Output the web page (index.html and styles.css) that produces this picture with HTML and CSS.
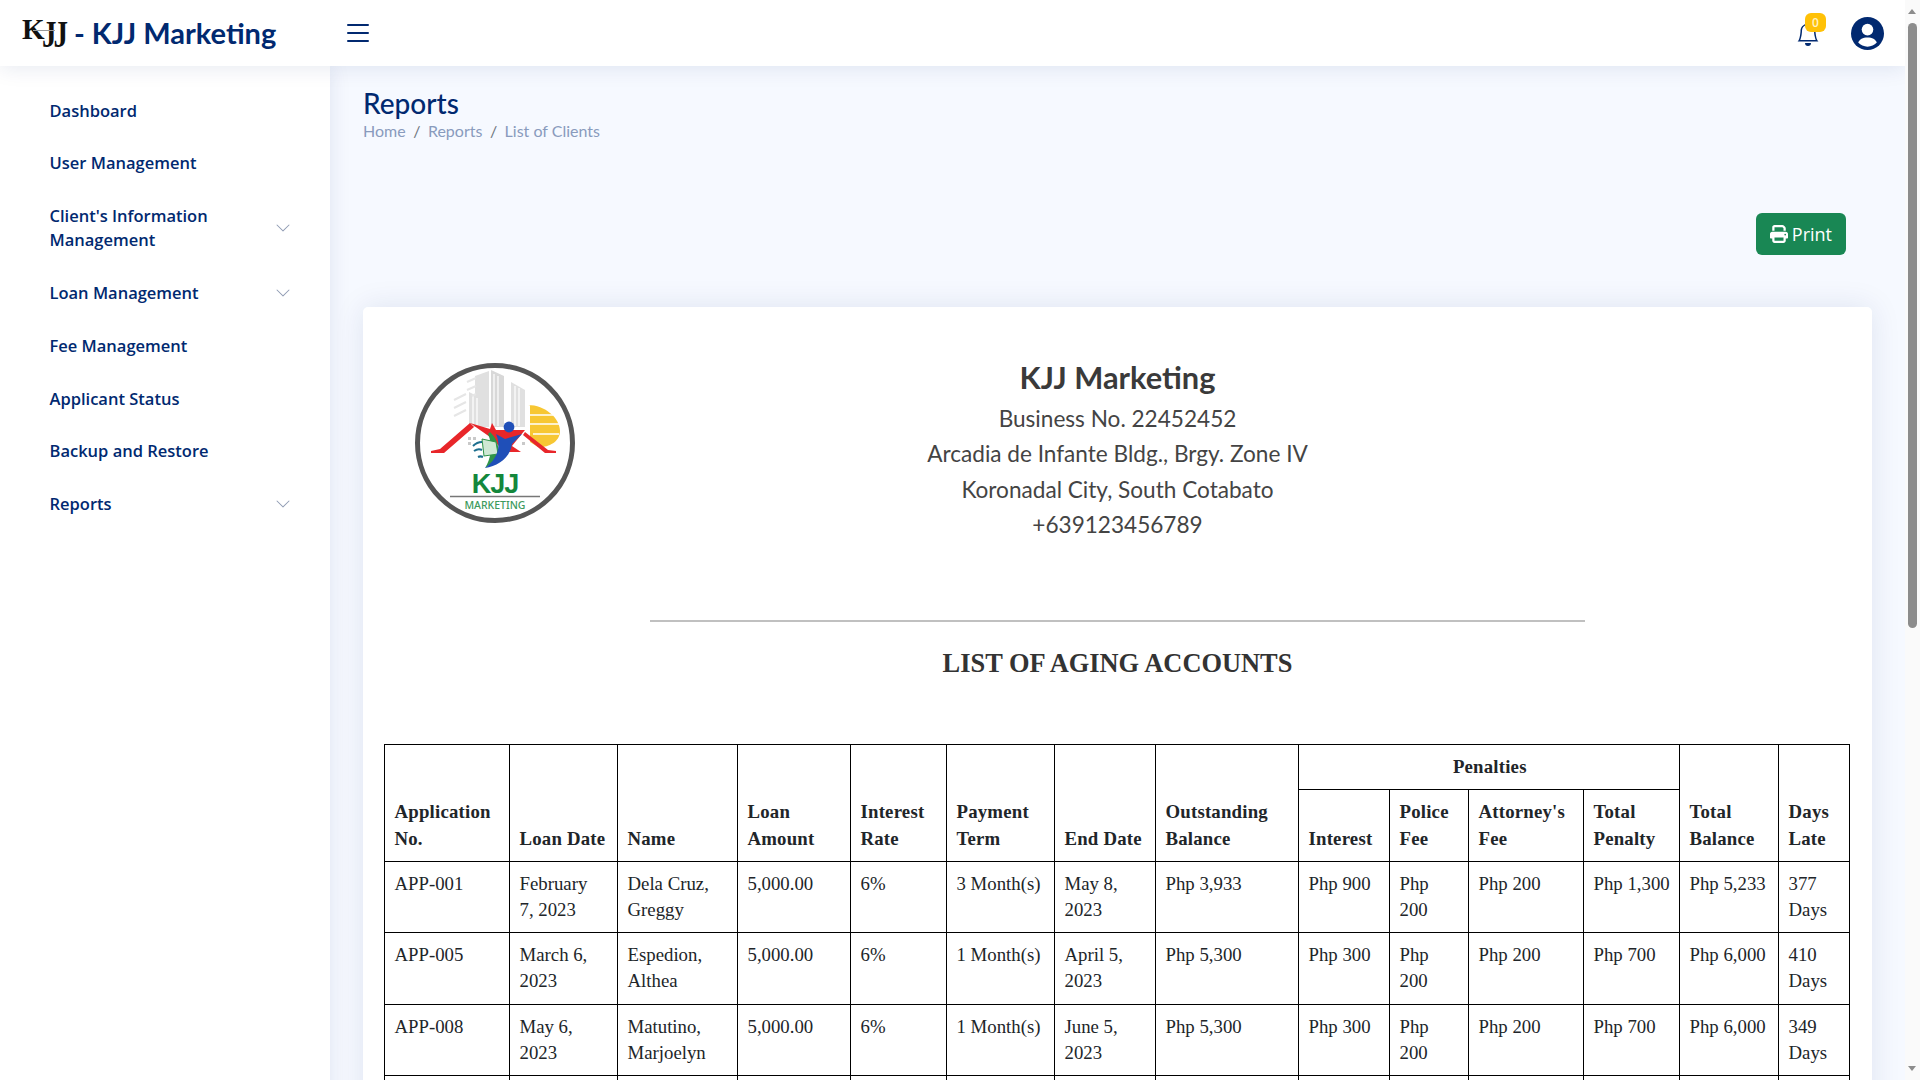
FILE: index.html
```html
<!DOCTYPE html>
<html lang="en">
<head>
<meta charset="utf-8">
<title>KJJ Marketing - Reports</title>
<link rel="stylesheet" href="styles.css">
</head>
<body>
<header class="topbar">
  <div class="brand">
    <span class="brand-mark"><span class="bm-k">K</span><span class="bm-j">JJ</span><span class="bm-small"></span></span>
    <span class="brand-text">- KJJ Marketing</span>
  </div>
  <svg class="menu-icon" viewBox="0 0 16 16" fill="currentColor"><path fill-rule="evenodd" d="M2.5 12a.5.5 0 0 1 .5-.5h10a.5.5 0 0 1 0 1H3a.5.5 0 0 1-.5-.5zm0-4a.5.5 0 0 1 .5-.5h10a.5.5 0 0 1 0 1H3a.5.5 0 0 1-.5-.5zm0-4a.5.5 0 0 1 .5-.5h10a.5.5 0 0 1 0 1H3a.5.5 0 0 1-.5-.5z"/></svg>
  <div class="top-actions">
    <div class="bell">
      <svg class="bell-icon" viewBox="0 0 16 16" fill="currentColor"><path d="M8 16a2 2 0 0 0 2-2H6a2 2 0 0 0 2 2zM8 1.918l-.797.161A4.002 4.002 0 0 0 4 6c0 .628-.134 2.197-.459 3.742-.16.767-.376 1.566-.663 2.258h10.244c-.287-.692-.502-1.49-.663-2.258C12.134 8.197 12 6.628 12 6a4.002 4.002 0 0 0-3.203-3.92L8 1.917zM14.22 12c.223.447.481.801.78 1H1c.299-.199.557-.553.78-1C2.68 10.2 3 6.88 3 6c0-2.42 1.72-4.44 4.005-4.901a1 1 0 1 1 1.99 0A5.002 5.002 0 0 1 13 6c0 .88.32 4.2 1.22 6z"/></svg>
      <span class="badge">0</span>
    </div>
    <svg class="avatar" viewBox="0 0 33 33"><defs><clipPath id="avatar-clip"><circle cx="16.5" cy="16.5" r="16.5"/></clipPath></defs><circle cx="16.5" cy="16.5" r="16.5" fill="#012970"/><circle cx="16.5" cy="12.6" r="5.8" fill="#fff"/><path d="M7.2 25.6c1.2-3.5 4.6-5.2 9.3-5.2s8.1 1.7 9.3 5.2c-2.4 2.7-5.7 4.1-9.3 4.1s-6.900-1.400-9.300-4.100z" fill="#fff" clip-path="url(#avatar-clip)"/></svg>
  </div>
</header>

<div class="layout">
  <aside class="sidebar">
    <nav class="nav">
      <a class="nav-link">Dashboard</a>
      <a class="nav-link">User Management</a>
      <a class="nav-link"><span class="nav-label">Client's Information Management</span><svg class="chev" viewBox="0 0 16 16" fill="currentColor"><path fill-rule="evenodd" d="M1.646 4.646a.5.5 0 0 1 .708 0L8 10.293l5.646-5.647a.5.5 0 0 1 .708.708l-6 6a.5.5 0 0 1-.708 0l-6-6a.5.5 0 0 1 0-.708z"/></svg></a>
      <a class="nav-link">Loan Management<svg class="chev" viewBox="0 0 16 16" fill="currentColor"><path fill-rule="evenodd" d="M1.646 4.646a.5.5 0 0 1 .708 0L8 10.293l5.646-5.647a.5.5 0 0 1 .708.708l-6 6a.5.5 0 0 1-.708 0l-6-6a.5.5 0 0 1 0-.708z"/></svg></a>
      <a class="nav-link">Fee Management</a>
      <a class="nav-link">Applicant Status</a>
      <a class="nav-link">Backup and Restore</a>
      <a class="nav-link">Reports<svg class="chev" viewBox="0 0 16 16" fill="currentColor"><path fill-rule="evenodd" d="M1.646 4.646a.5.5 0 0 1 .708 0L8 10.293l5.646-5.647a.5.5 0 0 1 .708.708l-6 6a.5.5 0 0 1-.708 0l-6-6a.5.5 0 0 1 0-.708z"/></svg></a>
    </nav>
  </aside>

  <main class="main">
    <h1 class="page-title">Reports</h1>
    <ol class="crumbs">
      <li>Home</li><li class="sep">/</li><li>Reports</li><li class="sep">/</li><li>List of Clients</li>
    </ol>
    <div class="print-row">
      <button class="print-btn" type="button">
        <svg class="print-icon" viewBox="0 0 512 512" fill="currentColor"><path d="M128 0C92.700 0 64 28.700 64 64v96h64V64H354.700L384 93.300V160h64V93.300c0-17-6.700-33.300-18.700-45.300L400 18.700C388 6.700 371.700 0 354.700 0H128zM384 352v96H128V352H384zm64 32h32c17.700 0 32-14.300 32-32V256c0-35.300-28.700-64-64-64H64c-35.300 0-64 28.700-64 64v96c0 17.700 14.300 32 32 32H64v64c0 35.300 28.700 64 64 64H384c35.300 0 64-28.700 64-64V384zM432 248a24 24 0 1 1 0 48 24 24 0 1 1 0-48z"/></svg>
        Print
      </button>
    </div>

    <section class="card">
      <div class="letterhead">
        <svg class="seal" viewBox="25 23 160 160">
          <g fill="#e0e0e0">
            <path d="M85 36l14-5v56H85z"/><path d="M101 30l13 6v51h-13z" fill="#d8d8d8"/>
            <path d="M121 42l14 8v37h-14z"/>
            <path d="M79 52l12 6v29H79z"/>
          </g>
          <g stroke="#fff" stroke-width="1.200">
            <path d="M104 34v52M108 36v50M125 46v40M129 48v38M83 56v30M87 58v28"/>
          </g>
          <g stroke="#e6e6e6" stroke-width="2" fill="none">
            <path d="M64 60l12-6M64 68l12-6M64 76l12-6M86 38l-9 4M86 46l-9 4M86 54l-4 2"/>
          </g>
          <path d="M138 65c17 0 32 13 32 26 0 12-14 17-22 16l-8-5v-37z" fill="#f7c733"/>
          <g stroke="#fff" stroke-width="1.300"><path d="M138 75h25M138 84h32M143 94h26"/></g>
          <path d="M78 97h3v3h-3zM83 97h3v3h-3zM78 102h3v3h-3zM132 102h3v3h-3z" fill="#c9c9c9"/>
          <path d="M41 111l9-2 30-26 4 4-30 26H41z" fill="#e8262a"/>
          <path d="M80 83l20 6 2-6 4 7h29l-13 16 9 6h-16L100 97z" fill="#e8262a"/>
          <path d="M135 92l23 18 8 1v2h-11l-22-18z" fill="#e8262a"/>
          <path d="M100 92c8 7 12 20 4 30l-9 6c6-9 8-23 3-34z" fill="#2f9448"/>
          <path d="M92 99l14 3 2 12-14 2z" fill="#cfe8d4" stroke="#2f9448" stroke-width="1"/>
          <path d="M83 106c3-3 6-4 9-4M84 111c3-2 6-2 8-1M88 117c2-1 3-1 5 0" fill="none" stroke="#1d6f8f" stroke-width="2"/>
          <path d="M106 94l9 5 17-5-10 10c-2 14-14 22-27 24 11-8 17-20 11-34z" fill="#1f4fb8"/>
          <circle cx="119" cy="87" r="5.400" fill="#1f4fb8"/>
          <text class="seal-kjj" x="105" y="153" text-anchor="middle">KJJ</text>
          <path d="M60 156.500h90" stroke="#777" stroke-width="1.400"/>
          <text class="seal-mk" x="105" y="169" text-anchor="middle">MARKETING</text>
          <circle cx="105" cy="103" r="77.500" fill="none" stroke="#555" stroke-width="5"/>
        </svg>
        <div class="org">
          <h2 class="org-name">KJJ Marketing</h2>
          <p>Business No. 22452452</p>
          <p>Arcadia de Infante Bldg., Brgy. Zone IV</p>
          <p>Koronadal City, South Cotabato</p>
          <p>+639123456789</p>
        </div>
      </div>
      <hr class="rule">
      <h3 class="report-title">LIST OF AGING ACCOUNTS</h3>
      <table class="report">
        <colgroup>
          <col class="c1"><col class="c2"><col class="c3"><col class="c4"><col class="c5"><col class="c6"><col class="c7"><col class="c8"><col class="c9"><col class="c10"><col class="c11"><col class="c12"><col class="c13"><col class="c14">
        </colgroup>
        <thead>
          <tr>
            <th rowspan="2">Application No.</th><th rowspan="2">Loan Date</th><th rowspan="2">Name</th><th rowspan="2">Loan Amount</th><th rowspan="2">Interest Rate</th><th rowspan="2">Payment Term</th><th rowspan="2">End Date</th><th rowspan="2">Outstanding Balance</th>
            <th colspan="4" class="group">Penalties</th>
            <th rowspan="2">Total Balance</th><th rowspan="2">Days Late</th>
          </tr>
          <tr><th>Interest</th><th>Police Fee</th><th>Attorney's Fee</th><th>Total Penalty</th></tr>
        </thead>
        <tbody>
          <tr><td>APP-001</td><td>February 7,&nbsp;2023</td><td>Dela Cruz, Greggy</td><td>5,000.00</td><td>6%</td><td>3 Month(s)</td><td>May 8, 2023</td><td>Php 3,933</td><td>Php 900</td><td>Php 200</td><td>Php 200</td><td>Php 1,300</td><td>Php 5,233</td><td>377 Days</td></tr>
          <tr><td>APP-005</td><td>March 6, 2023</td><td>Espedion, Althea</td><td>5,000.00</td><td>6%</td><td>1 Month(s)</td><td>April 5, 2023</td><td>Php 5,300</td><td>Php 300</td><td>Php 200</td><td>Php 200</td><td>Php 700</td><td>Php 6,000</td><td>410 Days</td></tr>
          <tr><td>APP-008</td><td>May 6, 2023</td><td>Matutino, Marjoelyn</td><td>5,000.00</td><td>6%</td><td>1 Month(s)</td><td>June 5, 2023</td><td>Php 5,300</td><td>Php 300</td><td>Php 200</td><td>Php 200</td><td>Php 700</td><td>Php 6,000</td><td>349 Days</td></tr>
          <tr class="blank"><td></td><td></td><td></td><td></td><td></td><td></td><td></td><td></td><td></td><td></td><td></td><td></td><td></td><td></td></tr>
        </tbody>
      </table>
    </section>
  </main>
</div>

<div class="scrollbar" aria-hidden="true">
  <span class="sb-up"></span>
  <span class="sb-thumb"></span>
  <span class="sb-down"></span>
</div>
</body>
</html>
```
FILE: styles.css
```css
* { box-sizing: border-box; }
body {
  margin: 0 15px 0 0;
  background: #f6f9ff;
  color: #444;
  font-family: "Open Sans", sans-serif;
}

.scrollbar {
  position: fixed;
  top: 0;
  right: 0;
  bottom: 0;
  z-index: 10;
  width: 15px;
  background: #fafafa;
}
.sb-up, .sb-down {
  position: absolute;
  left: 3px;
  width: 0;
  height: 0;
  border-left: 4.500px solid transparent;
  border-right: 4.500px solid transparent;
}
.sb-up { top: 9px; border-bottom: 5px solid #8c8c8c; }
.sb-down { bottom: 9px; border-top: 5px solid #8c8c8c; }
.sb-thumb {
  position: absolute;
  top: 23px;
  left: 3px;
  width: 9px;
  height: 605px;
  border-radius: 5px;
  background: #8c8c8c;
}

.topbar {
  position: sticky;
  top: 0;
  z-index: 5;
  height: 66px;
  display: flex;
  align-items: center;
  padding-left: 22px;
  padding-right: 21px;
  background: #fff;
  box-shadow: 0 2px 20px rgba(1, 41, 112, .1);
}
.brand { width: 320px; display: flex; align-items: center; gap: 9px; }
.brand-mark {
  position: relative;
  width: 43px;
  height: 30px;
  color: #111;
  font: 700 29px/30px "Liberation Serif", serif;
  white-space: nowrap;
}
.bm-k { position: absolute; left: 0; top: -4px; }
.bm-j { position: absolute; left: 20px; top: -4px; letter-spacing: -3px; transform: scaleY(1.3); transform-origin: top; }
.bm-small {
  position: absolute;
  left: 11px;
  top: 12px;
  width: 22px;
  height: 1px;
  background: #999;
}
.brand-text {
  color: #012970;
  font: 700 29px/32px Lato, sans-serif;
  white-space: nowrap;
}
.menu-icon { width: 32px; height: 32px; color: #012970; }
.top-actions { margin-left: auto; display: flex; align-items: center; gap: 31px; }
.bell { position: relative; width: 24px; height: 24px; margin-top: 2px; color: #012970; }
.bell-icon { display: block; width: 24px; height: 24px; }
.badge {
  position: absolute;
  top: -9.500px;
  left: 9px;
  width: 21px;
  height: 19px;
  border-radius: 6px;
  background: #ffc107;
  color: #fff3c4;
  font: 600 12px/19px "Open Sans", sans-serif;
  text-align: center;
}
.avatar { width: 33px; height: 33px; display: block; }

.layout { display: flex; align-items: stretch; }
.sidebar {
  flex: 0 0 330px;
  min-height: 1800px;
  padding: 18.500px 0 0 20px;
  background: #fff;
  box-shadow: 0 0 20px rgba(1, 41, 112, .1);
}
.nav { display: flex; flex-direction: column; }
.nav-link {
  display: flex;
  align-items: center;
  justify-content: space-between;
  padding: 14.100px 39px 14.100px 29.500px;
  color: #012970;
  font: 600 16.500px/24.500px "Open Sans", sans-serif;
}
.nav-label { max-width: 190px; }
.chev { width: 16px; height: 16px; color: #8f9bb3; flex: none; }

.main { flex: 1; padding: 20px 33px 60px 33px; min-width: 0; }
.page-title {
  margin: 0;
  color: #012970;
  font: 500 28px/34px Lato, sans-serif;
}
.crumbs {
  display: flex;
  gap: 7.500px;
  list-style: none;
  margin: 0;
  padding: 0;
  color: #899bbd;
  font: 400 16px/22px Lato, sans-serif;
}
.sep { color: #6c757d; }
.print-row { display: flex; justify-content: flex-end; padding: 71px 26px 0 0; }
.print-btn {
  display: flex;
  align-items: center;
  gap: 4px;
  height: 42px;
  padding: 0 14px;
  border: 0;
  border-radius: 6px;
  background: #198754;
  color: #fff;
  font: 400 18px/28px "Open Sans", sans-serif;
}
.print-icon { width: 18px; height: 18px; }

.card {
  margin-top: 52px;
  min-height: 1500px;
  padding: 52px 21px 20px;
  border-radius: 5px;
  background: #fff;
  box-shadow: 0 0 30px rgba(1, 41, 112, .1);
}
.letterhead { position: relative; display: flex; justify-content: center; }
.seal { position: absolute; left: 30.500px; top: 4px; width: 160px; height: 160px; }
.seal-kjj { fill: #14873c; font: 700 27px "Liberation Sans", sans-serif; letter-spacing: -1px; }
.seal-mk { fill: #3d9a5c; font: 500 10.500px "Noto Sans", sans-serif; }
.org { text-align: center; color: #444; }
.org-name {
  margin: 0 0 4px;
  color: #3a3a3a;
  font: 700 30.800px/38px Lato, sans-serif;
}
.org p {
  margin: 0;
  font: 400 22.600px/35.300px Lato, sans-serif;
}
.rule {
  width: 935px;
  height: 2px;
  margin: 78px auto 0;
  border: 0;
  background: #c0c0c0;
}
.report-title {
  margin: 24.500px 0 65.500px;
  text-align: center;
  color: #333;
  font: 700 26.400px/32px "Liberation Serif", serif;
}

.report {
  width: 1465px;
  table-layout: fixed;
  border-collapse: collapse;
  color: #212529;
  font: 400 18.800px/26.200px "Liberation Serif", serif;
}
.report th, .report td {
  padding: 9px 8px 9px 9.500px;
  border: 1px solid #000;
  text-align: left;
  vertical-align: bottom;
}
.report th { letter-spacing: .2px; }
.report td { vertical-align: top; }
.report th.group { text-align: center; }
.blank td { height: 72px; }
.c1 { width: 125px; }
.c2 { width: 108px; }
.c3 { width: 120px; }
.c4 { width: 113px; }
.c5 { width: 96px; }
.c6 { width: 108px; }
.c7 { width: 101px; }
.c8 { width: 143px; }
.c9 { width: 91px; }
.c10 { width: 79px; }
.c11 { width: 115px; }
.c12 { width: 96px; }
.c13 { width: 99px; }
.c14 { width: 71px; }
```
